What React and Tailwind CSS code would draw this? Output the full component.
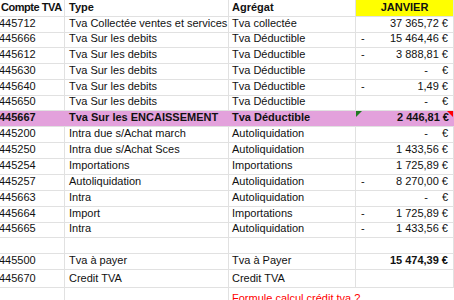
const rows = [
  { h: 'h-[16px]', code: '445712', type: 'Tva Collectée ventes et services', agg: 'Tva collectée', amt: '37 365,72 €' },
  { h: 'h-[15px]', code: '445666', type: 'Tva Sur les debits', agg: 'Tva Déductible', neg: true, amt: '15 464,46 €' },
  { h: 'h-[16px]', code: '445612', type: 'Tva Sur les debits', agg: 'Tva Déductible', neg: true, amt: '3 888,81 €' },
  { h: 'h-[16px]', code: '445630', type: 'Tva Sur les debits', agg: 'Tva Déductible', zero: true },
  { h: 'h-[16px]', code: '445640', type: 'Tva Sur les debits', agg: 'Tva Déductible', neg: true, amt: '1,49 €' },
  { h: 'h-[15px]', code: '445650', type: 'Tva Sur les debits', agg: 'Tva Déductible', zero: true },
  { h: 'h-[16px]', code: '445667', type: 'Tva Sur les ENCAISSEMENT', agg: 'Tva Déductible', amt: '2 446,81 €', hl: true },
  { h: 'h-[16px]', code: '445200', type: 'Intra due s/Achat march', agg: 'Autoliquidation', zero: true },
  { h: 'h-[16px]', code: '445250', type: 'Intra due s/Achat Sces', agg: 'Autoliquidation', amt: '1 433,56 €' },
  { h: 'h-[16px]', code: '445254', type: 'Importations', agg: 'Importations', amt: '1 725,89 €' },
  { h: 'h-[16px]', code: '445257', type: 'Autoliquidation', agg: 'Autoliquidation', neg: true, amt: '8 270,00 €' },
  { h: 'h-[16px]', code: '445663', type: 'Intra', agg: 'Autoliquidation', zero: true },
  { h: 'h-[16px]', code: '445664', type: 'Import', agg: 'Importations', neg: true, amt: '1 725,89 €' },
  { h: 'h-[15px]', code: '445665', type: 'Intra', agg: 'Autoliquidation', neg: true, amt: '1 433,56 €' },
  { h: 'h-[16px]', code: '', type: '', agg: '' },
  { h: 'h-[16px]', code: '445500', type: 'Tva à payer', agg: 'Tva à Payer', amt: '15 474,39 €', bold: true },
  { h: 'h-[18px]', code: '445670', type: 'Credit TVA', agg: 'Credit TVA' },
]

const base = 'flex items-end pb-[1px] overflow-hidden whitespace-nowrap border-b border-[#e1e1e1]'

function Row({ r }) {
  const cell = r.hl ? base : `${base} border-r`
  const bg = r.hl ? 'bg-[#e3a1dc] font-bold' : ''
  return (
    <div className={`grid grid-cols-[65px_164px_127px_98px] ${r.h} ${bg}`}>
      <div className={`${cell} -ml-[1px] pl-0`}>{r.code}</div>
      <div className={`${cell} pl-[4px]`}>{r.type}</div>
      <div className={`${cell} pl-[3px]`}>{r.agg}</div>
      <div className={`${cell} relative justify-between pl-[5px] pr-[5px]`}>
        {r.hl && (
          <>
            <span className="absolute left-0 top-0 h-0 w-0 border-r-[6px] border-t-[6px] border-r-transparent border-t-[#1f7a1f]" />
            <span className="absolute right-[1px] top-0 h-0 w-0 border-l-[6px] border-t-[6px] border-l-transparent border-t-[#ff0000]" />
          </>
        )}
        <span>{r.neg ? '-' : ''}</span>
        {r.zero ? (
          <span><span className="mr-[14px]">-</span>€</span>
        ) : (
          <span className={r.bold ? 'font-bold' : ''}>{r.amt}</span>
        )}
      </div>
    </div>
  )
}

export default function App() {
  return (
    <div className="h-[300px] w-[454px] overflow-hidden bg-white text-[11px] text-[#111]" style={{ fontFamily: '"Liberation Sans", Arial, sans-serif' }}>
      <div className="grid h-[17px] grid-cols-[65px_164px_127px_98px] font-bold">
        <div className={`${base} border-r pl-[1px] tracking-[-0.45px]`}>Compte TVA</div>
        <div className={`${base} border-r pl-[4px]`}>Type</div>
        <div className={`${base} border-r pl-[3px]`}>Agrégat</div>
        <div className={`${base} border-r justify-center bg-[#ffff00]`}>JANVIER</div>
      </div>
      {rows.map((r, i) => (
        <Row key={i} r={r} />
      ))}
      <div className="grid h-[20px] grid-cols-[65px_164px_225px]">
        <div className="border-r border-[#e1e1e1]" />
        <div className="border-r border-[#e1e1e1]" />
        <div className="flex items-center whitespace-nowrap pl-[3px] text-[#ff0000]">Formule calcul crédit tva ?</div>
      </div>
    </div>
  )
}
